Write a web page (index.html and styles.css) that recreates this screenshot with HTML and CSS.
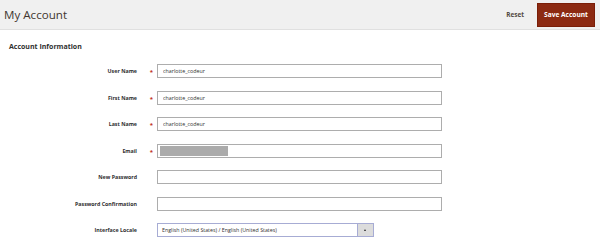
FILE: index.html
```html
<!DOCTYPE html>
<html>
<head>
    <meta charset="utf-8" />
    <title>My Account</title>
    <link rel="stylesheet" href="styles.css">
</head>
<body>
    <div class="topbar">
        <h1 class="titulo">My Account</h1>
        <div class="acoes">
            <button class="btnreset">Reset</button>
            <button class="btnsalvar">Save Account</button>
        </div>
    </div>
    <div class="conteudo">
        <h2 class="secao">Account Information</h2>
        <div class="form">
            <label class="rotulo">User Name</label><span class="req">*</span>
            <div class="campo"><input type="text" class="entrada" value="charlotte_codeur"></div>

            <label class="rotulo">First Name</label><span class="req">*</span>
            <div class="campo"><input type="text" class="entrada" value="charlotte_codeur"></div>

            <label class="rotulo">Last Name</label><span class="req">*</span>
            <div class="campo"><input type="text" class="entrada" value="charlotte_codeur"></div>

            <label class="rotulo">Email</label><span class="req">*</span>
            <div class="campo"><div class="entrada caixa"><span class="oculto"></span></div></div>

            <label class="rotulo">New Password</label><span class="req"></span>
            <div class="campo"><input type="password" class="entrada"></div>

            <label class="rotulo">Password Confirmation</label><span class="req"></span>
            <div class="campo"><input type="password" class="entrada"></div>

            <label class="rotulo">Interface Locale</label><span class="req"></span>
            <div class="campo">
                <div class="selecao">
                    <span class="selecaotxt">English (United States) / English (United States)</span>
                    <span class="seta"></span>
                </div>
            </div>
        </div>
    </div>
</body>
</html>
```

FILE: styles.css
```css
body{
    margin: 0;
    font-family: "Open Sans", "DejaVu Sans", sans-serif;
    color: #303030;
    background: #fff;
}
.topbar{
    height: 29px;
    background: #f0f0f0;
    border-bottom: 1px solid #e0e0e0;
    display: flex;
    align-items: center;
    justify-content: space-between;
    padding: 0 5px 0 4px;
}
.titulo{
    margin: 0;
    font-size: 11.6px;
    font-weight: normal;
    color: #41362f;
}
.acoes{
    display: flex;
    align-items: center;
    gap: 13px;
}
.btnreset{
    border: none;
    background: none;
    padding: 0;
    font-family: inherit;
    font-size: 6.4px;
    font-weight: bold;
    color: #514943;
}
.btnsalvar{
    font-family: inherit;
    font-size: 6.6px;
    font-weight: bold;
    color: #fff;
    background: #8c2a12;
    border: 1px solid #7a1e08;
    width: 58px;
    height: 24px;
    padding: 0;
}
.conteudo{
    padding: 11px 9px 0;
}
.secao{
    margin: 0;
    font-size: 7px;
    font-weight: bold;
    color: #303030;
    height: 12px;
    line-height: 12px;
}
.form{
    display: grid;
    grid-template-columns: 128px 20px 285px;
    grid-auto-rows: 14px;
    row-gap: 12.5px;
    margin-top: 11px;
    align-items: center;
}
.rotulo{
    text-align: right;
    font-size: 5.3px;
    font-weight: bold;
    line-height: 14px;
    color: #303030;
}
.req{
    color: #c03020;
    font-size: 6px;
    font-weight: bold;
    text-align: right;
    padding-right: 4px;
    line-height: 14px;
    height: 14px;
    padding-top: 1px;
    box-sizing: border-box;
}
.campo{
    height: 14px;
}
.entrada{
    display: block;
    box-sizing: border-box;
    width: 285px;
    height: 14px;
    margin: 0;
    border: 1px solid #adadad;
    padding: 0 5px;
    font-family: inherit;
    font-size: 5.3px;
    color: #303030;
    background: #fff;
}
.caixa{
    padding: 1px 2px;
}
.oculto{
    display: block;
    width: 68px;
    height: 10px;
    background: #ababab;
}
.selecao{
    box-sizing: border-box;
    width: 217px;
    height: 14px;
    border: 1px solid #a7acd4;
    display: flex;
    align-items: center;
    background: #fff;
}
.selecaotxt{
    flex: 1;
    padding-left: 4px;
    font-size: 5.3px;
    color: #303030;
}
.seta{
    width: 15px;
    height: 12px;
    background: #dcdcdc;
    border-left: 1px solid #a7acd4;
    position: relative;
}
.seta:after{
    content: "";
    position: absolute;
    left: 6px;
    top: 5px;
    border-left: 1.5px solid transparent;
    border-right: 1.5px solid transparent;
    border-bottom: 2px solid #222;
}
```
